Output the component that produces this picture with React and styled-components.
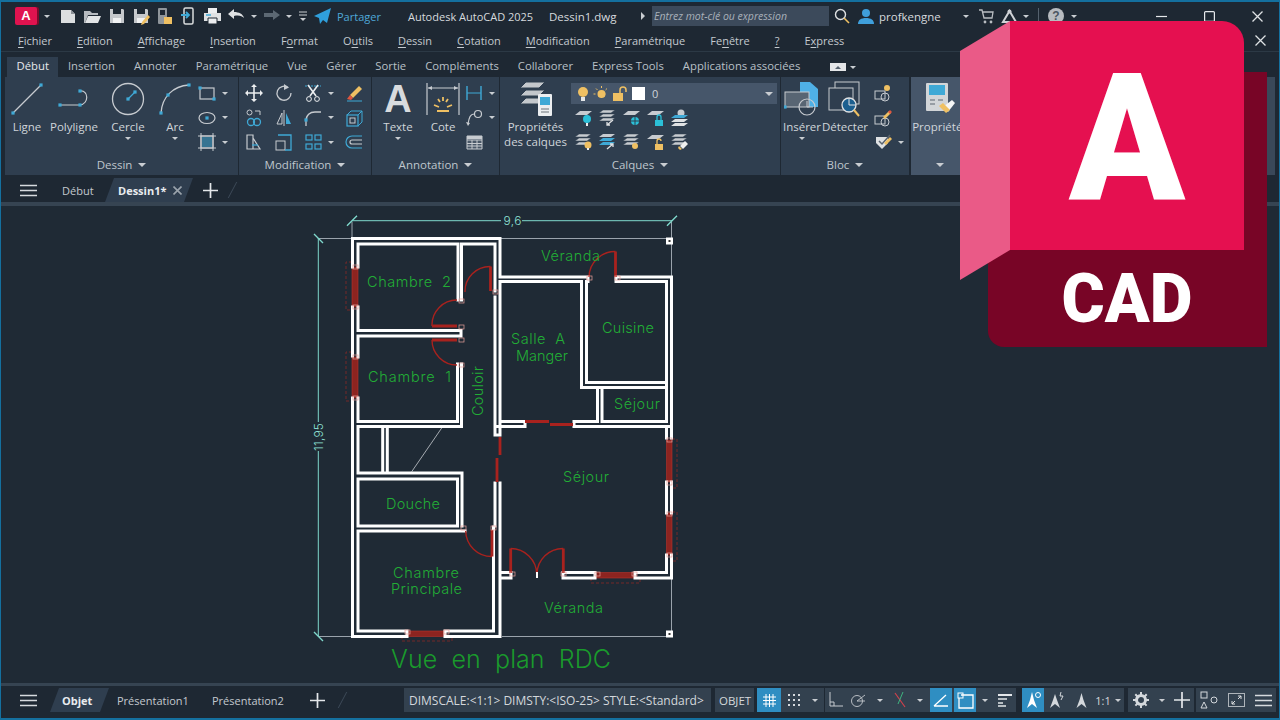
import React from 'react';
import styled, { createGlobalStyle } from 'styled-components';

const GREY = '#c9cdd2';
const CYAN = '#3fa9d6';
const YEL = '#efc063';
const DARK = '#1f2a35';

const GlobalStyle = createGlobalStyle`
  html, body { margin: 0; padding: 0; background: ${DARK}; overflow: hidden; }
  * { box-sizing: border-box; }
`;

const Window = styled.div`
  position: relative;
  width: 1280px;
  height: 720px;
  display: flex;
  flex-direction: column;
  padding-top: 2px;
  background: #1e2833;
  color: #c3c9cf;
  font-family: "Open Sans", "Noto Sans", sans-serif;
  font-size: 11.5px;
  overflow: hidden;
  &::after {
    content: '';
    position: absolute;
    inset: 0;
    border: solid #14709f;
    border-width: 2px 1px 2px 1px;
    pointer-events: none;
  }
`;

/* ---------- bars ---------- */
const TitleBar = styled.div`
  height: 28px;
  display: flex;
  align-items: center;
  flex: none;
  padding-left: 15px;
`;
const Slot = styled.div`
  width: ${p => p.$w}px;
  margin-left: ${p => p.$ml || 0}px;
  flex: none;
  display: flex;
  align-items: center;
  justify-content: center;
`;
const AppButton = styled.div`
  width: 22px;
  height: 18px;
  background: #e0134f;
  border-radius: 2px;
  box-shadow: 2px 0 0 #7b0b2c;
  color: #fff;
  font: 700 13px "Liberation Sans", sans-serif;
  text-align: center;
  line-height: 18px;
`;
const Caret = styled.span`
  display: inline-block;
  flex: none;
  width: 0;
  height: 0;
  border-left: ${p => p.$s || 3}px solid transparent;
  border-right: ${p => p.$s || 3}px solid transparent;
  ${p => (p.$up ? 'border-bottom' : 'border-top')}: ${p => p.$s || 3}px solid ${p => p.$c || GREY};
`;
const ShareText = styled.span`
  color: #4fa8d8;
  margin-left: 3px;
  width: 71px;
  flex: none;
  font-size: 11px;
`;
const TitleText = styled.span`
  color: #d6dade;
  font-size: ${p => p.$fs || 11.5}px;
  width: ${p => p.$w}px;
  flex: none;
  white-space: nowrap;
`;
const PlayMark = styled.span`
  width: 0;
  height: 0;
  flex: none;
  margin: 0 7px 0 0;
  border-top: 4px solid transparent;
  border-bottom: 4px solid transparent;
  border-left: 4px solid #c9cdd2;
`;
const SearchBox = styled.div`
  width: 177px;
  height: 20px;
  flex: none;
  background: #3c4a5b;
  color: #a9b1ba;
  font-style: italic;
  font-size: 10.5px;
  line-height: 20px;
  padding-left: 2px;
`;
const UserName = styled.span`
  width: 74px;
  flex: none;
  margin-left: 2px;
  color: #d6dade;
  font-size: 11.5px;
`;
const Sep = styled.span`
  width: 1px;
  height: 16px;
  flex: none;
  background: #55616e;
`;
const HelpMark = styled.text`
  font: 700 12px "Liberation Sans", sans-serif;
  fill: #4a5560;
  text-anchor: middle;
`;

const MenuBar = styled.div`
  height: 22px;
  flex: none;
  display: flex;
  align-items: center;
  gap: 25px;
  padding-left: 18px;
  border-bottom: 1px solid #2c3945;
  position: relative;
`;
const MenuItem = styled.span`
  white-space: nowrap;
  font-size: 11px;
  u { text-underline-offset: 2px; }
`;
const DocClose = styled.div`
  margin-left: auto;
  margin-right: 14px;
  display: flex;
`;

const TabBar = styled.div`
  height: 25px;
  flex: none;
  display: flex;
  align-items: flex-end;
  padding-left: 7px;
`;
const RibbonTab = styled.div`
  height: 20px;
  flex: none;
  white-space: nowrap;
  font-size: 11.3px;
  line-height: 18px;
  padding: 0 9.5px;
  background: ${p => (p.$active ? '#2f3e4f' : 'transparent')};
  color: ${p => (p.$active ? '#e6e9ec' : '#b9c0c7')};
`;
const WsSwitch = styled.div`
  margin-left: 20px;
  display: flex;
  align-items: center;
  gap: 4px;
  height: 20px;
`;
const WsBox = styled.span`
  width: 16px;
  height: 8px;
  background: #e4e6e8;
  display: flex;
  align-items: center;
  justify-content: center;
`;

/* ---------- ribbon ---------- */
const Ribbon = styled.div`
  height: 98px;
  flex: none;
  display: flex;
  gap: 1px;
  padding-left: 5px;
  padding-right: 5px;
`;
const Panel = styled.div`
  width: ${p => p.$w}px;
  flex: ${p => (p.$grow ? 1 : 'none')};
  margin-left: ${p => p.$ml || 0}px;
  background: ${p => p.$bg || '#2f3e4f'};
  display: flex;
  flex-direction: column;
`;
const PanelBody = styled.div`
  height: 78px;
  display: flex;
  padding: 4px 0 0 ${p => p.$pl || 0}px;
`;
const PanelLabel = styled.div`
  height: 20px;
  width: ${p => (p.$w ? p.$w + 'px' : 'auto')};
  padding-bottom: 1px;
  display: flex;
  align-items: center;
  justify-content: center;
  gap: 6px;
  font-size: 11.5px;
  color: #bfc6cd;
`;
const BigTool = styled.div`
  width: ${p => p.$w}px;
  flex: none;
  display: flex;
  flex-direction: column;
  align-items: center;
`;
const BigIcon = styled.div`
  height: 36px;
  display: flex;
  align-items: center;
  justify-content: center;
`;
const BigLabel = styled.div`
  margin-top: 2px;
  height: ${p => (p.$two ? 30 : 15)}px;
  line-height: 15px;
  white-space: nowrap;
  text-align: center;
  font-size: 11.5px;
  color: #d0d5da;
`;
const ToolCaret = styled.div`
  height: 8px;
  display: flex;
  align-items: center;
`;
const SmallColumn = styled.div`
  width: ${p => p.$w}px;
  flex: none;
  padding-left: ${p => p.$pl || 0}px;
  display: grid;
  grid-auto-rows: 24.5px;
`;
const SmallTool = styled.div`
  display: flex;
  align-items: center;
  justify-content: ${p => (p.$center ? 'center' : 'flex-start')};
  gap: 6px;
  height: 24.5px;
`;
const ToolGrid = styled.div`
  display: grid;
  grid-template-columns: ${p => p.$cols};
  grid-auto-rows: 24.5px;
`;
const LayerColumn = styled.div`
  width: 206px;
  flex: none;
`;
const LayerSelect = styled.div`
  height: 21px;
  margin: 2px 0 1.5px;
  background: #46566a;
  display: flex;
  align-items: center;
  gap: 2px;
  padding: 0 4px 0 4px;
`;
const Swatch = styled.span`
  width: 13px;
  height: 13px;
  margin-left: 2px;
  background: #fff;
  flex: none;
`;
const LayerName = styled.span`
  flex: 1;
  margin-left: 5px;
  color: #cfd4d9;
  font-size: 11px;
`;
const TextGlyph = styled.span`
  display: block;
  height: 36px;
  font: 700 38px "Liberation Sans", sans-serif;
  line-height: 36px;
  color: #d8dbde;
`;
const Gap = styled.div`
  height: 3px;
  flex: none;
`;

/* ---------- document tabs ---------- */
const DocTabs = styled.div`
  height: ${p => p.$h || 24}px;
  flex: none;
  display: flex;
  align-items: center;
  padding-left: 6px;
  width: ${p => (p.$w ? p.$w + 'px' : 'auto')};
`;
const MenuSlot = styled.div`
  width: 44px;
  flex: none;
  display: flex;
  justify-content: center;
`;
const DocTab = styled.div`
  height: 24px;
  flex: none;
  display: flex;
  align-items: center;
  white-space: nowrap;
  font-size: 11px;
  width: ${p => p.$w}px;
  padding-left: ${p => p.$pl || 0}px;
  font-weight: ${p => (p.$active ? 700 : 400)};
  color: ${p => (p.$active ? '#e9ecef' : '#c3c9cf')};
  background: ${p => (p.$active ? '#2f3e4f' : 'transparent')};
  clip-path: ${p => (p.$active ? 'polygon(9px 0, 100% 0, calc(100% - 9px) 100%, 0 100%)' : 'none')};
`;
const TabClose = styled.span`
  margin-left: 7px;
  display: flex;
`;
const Slash = styled.span`
  width: 1px;
  height: 16px;
  flex: none;
  margin-left: ${p => p.$ml || 0}px;
  background: #3d4a58;
  transform: skewX(-28deg);
`;
const Strip = styled.div`
  height: ${p => p.$h}px;
  flex: none;
  background: #364452;
`;
const Canvas = styled.div`
  height: 477px;
  flex: none;
  background: ${DARK};
`;
const StatusRow = styled.div`
  height: 30px;
  flex: none;
  display: flex;
  align-items: center;
  padding-bottom: 2px;
`;
const StatusGroup = styled.div`
  height: 24px;
  flex: none;
  display: flex;
  align-items: center;
  width: ${p => (p.$w ? p.$w + 'px' : 'auto')};
  margin-left: ${p => p.$ml || 0}px;
  padding-left: ${p => p.$pl || 0}px;
  background: #33414f;
  color: #d4d8dc;
  font-size: ${p => p.$fs || 11}px;
  white-space: nowrap;
`;
const StatusBtn = styled.div`
  width: ${p => p.$w}px;
  height: 24px;
  flex: none;
  margin-left: ${p => p.$ml || 0}px;
  display: flex;
  align-items: center;
  justify-content: center;
  background: ${p => (p.$on ? '#2f8ec2' : 'transparent')};
  font-size: 11px;
  color: #d4d8dc;
`;

/* ---------- overlay logo ---------- */
const Logo = styled.svg`
  position: absolute;
  left: 960px;
  top: 21px;
  z-index: 2;
`;
const LogoText = styled.text`
  font-family: "Roboto", "Liberation Sans", sans-serif;
  font-weight: 900;
  fill: #fff;
  text-anchor: middle;
`;

/* ---------- plan ---------- */
const PlanSvg = styled.svg`
  display: block;
`;
const PlanText = styled.text`
  font-family: "Inter", "Liberation Sans", sans-serif;
  font-weight: 300;
  font-size: ${p => p.$size || 14.5}px;
  fill: ${p => p.$c || '#22ad35'};
  white-space: pre;
`;

/* ---------- icons ---------- */
const Ico = ({ w = 18, h = 18, children }) => (
  <svg width={w} height={h} viewBox={`0 0 ${w} ${h}`} fill="none" style={{ display: 'block', flex: 'none' }}>
    {children}
  </svg>
);

const Hamburger = () => (
  <Ico w={17} h={13}><path d="M0 1.5h17M0 6.5h17M0 11.5h17" stroke="#d6dade" strokeWidth="1.7" /></Ico>
);
const Plus = ({ s = 15 }) => (
  <Ico w={s} h={s}><path d={`M${s / 2} 0V${s}M0 ${s / 2}H${s}`} stroke="#e4e7ea" strokeWidth="1.7" /></Ico>
);
const Cross = ({ s = 11, c = '#dfe2e5', sw = 1.2 }) => (
  <Ico w={s} h={s}><path d={`M0.5 0.5L${s - 0.5} ${s - 0.5}M${s - 0.5} 0.5L0.5 ${s - 0.5}`} stroke={c} strokeWidth={sw} /></Ico>
);

const Floppy = ({ pen }) => (
  <Ico>
    <path d="M2 2h13l1 1v13H2z" fill="#c5c8cc" />
    <path d="M5 2h8v5H5z" fill="#1e2833" />
    <path d="M5 11h8v5H5z" fill="#f1f2f3" />
    {pen && <path d="M10 15l6-7 2 2-6 7-3 1z" fill={YEL} />}
  </Ico>
);
const TitleIcons = {
  page: <Ico><path d="M2 3h10l4 4v9H2z" fill="#dcdee0" /><path d="M12 3v4h4" fill="#8b9097" /></Ico>,
  folder: <Ico><path d="M1 4h6l2 2h6v2H5l-3 8H1z" fill="#b7bbc0" /><path d="M5 9h13l-3 7H2z" fill="#e2e4e6" /></Ico>,
  doc: <Ico><rect x="3" y="1" width="9" height="16" rx="1" fill="#8f959b" /><path d="M9 10h8v7H9z" fill={YEL} /><path d="M5 3h5v5H5z" fill="#1e2833" /></Ico>,
  phone: <Ico><rect x="5" y="1" width="9" height="16" rx="1.5" stroke="#d9dbdd" strokeWidth="1.5" /><path d="M2 8h7M7 5l3 3-3 3" stroke={CYAN} strokeWidth="1.8" /></Ico>,
  print: <Ico w={19}><path d="M5 1h9v5H5z" fill="#eceef0" /><path d="M1 6h17v8H1z" fill="#dfe1e3" /><path d="M5 11h9v6H5z" fill="#eceef0" stroke="#1e2833" /><path d="M3 8h5" stroke={CYAN} strokeWidth="1.5" /></Ico>,
  undo: <Ico w={17}><path d="M0 7l6-5v3c5 0 9 2 10 6-2-2-5-3-10-2v3z" fill="#dfe1e3" /></Ico>,
  redo: <Ico w={17}><path d="M17 8l-7-5v3H1v4h9v3z" fill="#5c6873" /></Ico>,
  qat: <Ico w={10} h={12}><path d="M1 2h8M1 5h8" stroke={GREY} /><path d="M2 8h6l-3 3z" fill={GREY} /></Ico>,
  plane: <Ico w={18}><path d="M17 1L0 9l5 2 1 6 3-4 4 3z" fill="#2f9fdc" /></Ico>,
  search: <Ico w={16} h={16}><circle cx="6.5" cy="6.5" r="5" stroke="#dfe1e3" strokeWidth="1.4" /><path d="M10 10l5 5" stroke={YEL} strokeWidth="1.6" /></Ico>,
  user: <Ico w={16} h={16}><circle cx="8" cy="5" r="4" fill="#3f9fdc" /><path d="M0 16c0-4 3-6 8-6s8 2 8 6z" fill="#3f9fdc" /></Ico>,
  cart: <Ico w={15} h={15}><path d="M0 1h3l2 8h8l1-6H4" stroke="#b9bdc2" strokeWidth="1.3" /><circle cx="6" cy="13" r="1.4" fill="#b9bdc2" /><circle cx="12" cy="13" r="1.4" fill="#b9bdc2" /></Ico>,
  tri: <Ico w={17} h={15}><path d="M8.5 2L15 13H2z" stroke="#cfd2d6" strokeWidth="2" /><circle cx="8.5" cy="2.5" r="2" fill="#cfd2d6" /></Ico>,
  help: <Ico w={16} h={16}><circle cx="8" cy="8" r="8" fill="#b7bbc0" /><HelpMark x="8" y="12">?</HelpMark></Ico>,
  min: <Ico w={11} h={11}><path d="M0 5.5h11" stroke="#e4e7ea" strokeWidth="1.2" /></Ico>,
  max: <Ico w={11} h={11}><rect x=".6" y=".6" width="9.8" height="9.8" rx="1" stroke="#e4e7ea" strokeWidth="1.2" /></Ico>,
};

const Pt = ({ x, y }) => <rect x={x - 1.6} y={y - 1.6} width="3.2" height="3.2" fill={CYAN} />;
const RibbonBig = {
  line: <Ico w={34} h={34}><path d="M3 31L31 3" stroke="#c7cbd0" strokeWidth="1.2" /><Pt x={3} y={31} /><Pt x={31} y={3} /></Ico>,
  poly: <Ico w={36} h={30}><path d="M4 21H24M24 7c9-1 9 13 0 14" stroke="#c7cbd0" strokeWidth="1.2" /><Pt x={4} y={21} /><Pt x={24} y={21} /><Pt x={24} y={7} /></Ico>,
  circle: <Ico w={34} h={34}><circle cx="17" cy="17" r="15.5" stroke="#c7cbd0" strokeWidth="1.3" /><path d="M17 17l7-7" stroke={CYAN} strokeWidth="1.2" /><Pt x={17} y={17} /><Pt x={24} y={10} /></Ico>,
  arc: <Ico w={34} h={34}><path d="M3 31C4 15 15 4 31 3" stroke="#c7cbd0" strokeWidth="1.3" /><Pt x={3} y={31} /><Pt x={10} y={13} /><Pt x={31} y={3} /></Ico>,
  dim: <Ico w={34} h={34}><path d="M1 1V33M33 1V33M2 6H32" stroke="#c7cbd0" strokeWidth="1.2" /><path d="M2 6l4-2v4zM32 6l-4-2v4z" fill="#c7cbd0" /><path d="M8 23l5 2M26 23l-5 2M17 19v-4M11 29h12M12 17l2 3M22 17l-2 3" stroke={YEL} strokeWidth="1.8" /></Ico>,
  layers: <Ico w={36} h={40}>
    <path d="M8 3h19l-6 6H2zM8 11h19l-6 6H2zM8 19h19l-6 6H2z" fill="#c4c8cc" stroke="#2f3e4f" />
    <rect x="20" y="15" width="14" height="22" rx="1" fill="#eceef0" /><rect x="22" y="18" width="10" height="8" fill={CYAN} /><path d="M23 30h8M23 33h8" stroke="#6b7278" />
  </Ico>,
  insert: <Ico w={36} h={36}><path d="M16 1h10l8 7v18H16z" fill="#4fb0e6" /><rect x="1" y="11" width="24" height="15" fill="#586573" stroke="#c7cbd0" /><circle cx="23" cy="26" r="8" stroke="#c7cbd0" strokeWidth="1.2" /><path d="M23 20v6h6" stroke="#c7cbd0" /><Pt x={1} y={26} /></Ico>,
  detect: <Ico w={36} h={36}><rect x="8" y="1" width="24" height="22" stroke="#c7cbd0" /><rect x="2" y="7" width="24" height="22" fill="#2f3e4f" stroke="#c7cbd0" /><circle cx="22" cy="24" r="7" fill="#1c5f8f" stroke="#dfe1e3" strokeWidth="1.3" /><path d="M22 17v7h7" stroke="#dfe1e3" /><path d="M27 29l5 6" stroke={YEL} strokeWidth="2" /></Ico>,
  props: <Ico w={34} h={34}><rect x="3" y="1" width="22" height="28" rx="1" fill="#d2d5d8" /><rect x="6" y="3" width="16" height="10" fill={CYAN} /><path d="M7 18h5M15 18h5M7 22h5" stroke="#5d6670" strokeWidth="1.2" /><path d="M20 25l9-7 3 3-7 9z" fill="#f6f6f6" /><path d="M16 24l4-3 7 7-4 3z" fill={YEL} /></Ico>,
};

const stroke = '#c7cbd0';
const Small = {
  rect: <Ico><rect x="2" y="4" width="14" height="11" stroke={stroke} strokeWidth="1.2" /><Pt x={2} y={4} /><Pt x={16} y={15} /></Ico>,
  ellipse: <Ico><ellipse cx="9" cy="9" rx="8" ry="5.5" stroke={stroke} strokeWidth="1.2" /><Pt x={9} y={9} /></Ico>,
  hatch: <Ico><rect x="3" y="3" width="12" height="12" stroke={stroke} strokeWidth="1.2" /><path d="M4 4h10v10H4z" fill={CYAN} opacity=".5" /><path d="M0 3h18M0 15h18M3 0v18M15 0v18" stroke={stroke} /></Ico>,
  move: <Ico><path d="M9 1v16M1 9h16" stroke="#eceef0" strokeWidth="1.6" /><path d="M9 0l3 3H6zM9 18l3-3H6zM0 9l3-3v6zM18 9l-3-3v6z" fill="#eceef0" /></Ico>,
  rotate: <Ico><path d="M13 3.5A7 7 0 1 0 16 9" stroke={stroke} strokeWidth="1.3" /><path d="M9 0l5 3.5L9 6z" fill={stroke} /></Ico>,
  trim: <Ico><path d="M1 2h16" stroke={CYAN} strokeDasharray="2 1" /><path d="M4 1l8 11M14 1L6 12" stroke="#eceef0" strokeWidth="1.6" /><circle cx="5" cy="15" r="2.4" stroke="#eceef0" /><circle cx="13" cy="15" r="2.4" stroke="#eceef0" /></Ico>,
  erase: <Ico><path d="M5 11L14 2l3 3-9 9z" fill={YEL} /><path d="M5 11l3 3-2 2-4-1z" fill="#e0563f" /><path d="M2 17h15" stroke={CYAN} /></Ico>,
  copy: <Ico><rect x="2" y="1" width="5" height="5" rx="2.5" stroke={stroke} /><path d="M10 2h5v4" stroke={stroke} /><circle cx="6" cy="13" r="3.5" stroke={CYAN} strokeWidth="1.3" /><circle cx="12" cy="13" r="3.5" stroke={CYAN} strokeWidth="1.3" /></Ico>,
  mirror: <Ico><path d="M9 1v16" stroke={stroke} /><path d="M7 4v11H2z" stroke={stroke} /><path d="M11 4v11h5z" fill={CYAN} /></Ico>,
  fillet: <Ico><path d="M2 17v-5C2 6 6 3 11 3h6" stroke={stroke} strokeWidth="1.3" /><Pt x={2} y={11} /></Ico>,
  array3d: <Ico><rect x="2" y="6" width="11" height="11" stroke={CYAN} strokeWidth="1.2" /><path d="M2 6l4-4h11v11l-4 4M13 6l4-4" stroke={CYAN} /><rect x="5" y="9" width="5" height="5" stroke={stroke} /></Ico>,
  stretch: <Ico><path d="M2 2h6v14H2zM8 5l7 11H8" stroke={stroke} strokeWidth="1.2" /><path d="M7 12h6" stroke={CYAN} strokeWidth="1.3" /></Ico>,
  scale: <Ico><rect x="1" y="8" width="9" height="9" stroke={stroke} /><path d="M3 2h13v15h-6" stroke={CYAN} strokeWidth="1.3" /></Ico>,
  grid: <Ico><rect x="2" y="2" width="6" height="5" stroke={CYAN} strokeWidth="1.2" /><rect x="11" y="2" width="6" height="5" stroke={CYAN} strokeWidth="1.2" /><rect x="2" y="11" width="6" height="5" stroke={CYAN} strokeWidth="1.2" /><rect x="11" y="11" width="6" height="5" stroke={CYAN} strokeWidth="1.2" /></Ico>,
  offset: <Ico><path d="M17 3H7a6 6 0 0 0 0 12h10" stroke={CYAN} strokeWidth="1.2" /><path d="M17 7H7a2 2 0 0 0 0 4h10" stroke={stroke} strokeWidth="1.2" /></Ico>,
  hdim: <Ico><path d="M2 2v14M16 2v14" stroke={CYAN} strokeWidth="1.4" /><path d="M2 9h14" stroke={CYAN} /></Ico>,
  leader: <Ico><circle cx="13" cy="5" r="3.5" stroke={stroke} strokeWidth="1.2" /><path d="M9.5 5C5 5 4 9 3 15" stroke={stroke} strokeWidth="1.2" /><path d="M1 13l2 4 2-3z" fill={stroke} /></Ico>,
  table: <Ico><path d="M2 3h15v13H2z" fill="#4a5868" stroke={stroke} /><path d="M2 7h15M2 10.500h15M2 13h15M7 7v9M12 7v9" stroke={stroke} /><path d="M2 3h15v3H2z" fill={stroke} /></Ico>,
  attr: <Ico><rect x="1" y="7" width="10" height="8" stroke={stroke} /><circle cx="11" cy="13" r="4" stroke={stroke} /><circle cx="13" cy="4" r="3" fill={YEL} /></Ico>,
  attr2: <Ico><rect x="1" y="7" width="10" height="8" stroke={stroke} /><circle cx="11" cy="13" r="4" stroke={stroke} /><path d="M9 8l6-6 2 2-6 6z" fill={YEL} /><path d="M14 3l2-2 2 2-2 2z" fill="#e0563f" /></Ico>,
  tick: <Ico><path d="M2 4h12v6l-6 6-6-6z" fill="#dfe1e3" /><path d="M5 8l3 3 8-9" stroke="#59636e" strokeWidth="1.5" /><path d="M10 10l6-6 2 2-6 6z" fill={YEL} /></Ico>,
};

const layerBase = <path d="M6 2h12l-5 4H1z" fill="#c7cbd0" />;
const stack = <path d="M5 1h12l-4 3H1zM5 5h12l-4 3H1zM5 9h12l-4 3H1z" fill="#c7cbd0" stroke="#2f3e4f" strokeWidth=".5" />;
const LayerIcons = [
  <Ico key="a">{layerBase}<circle cx="13" cy="10" r="4" fill="#2bc0d8" /><path d="M12 14h2v3h-2z" fill="#eee" /></Ico>,
  <Ico key="b">{stack}<path d="M9 16l6-5M12 16H9v-3" stroke="#dfe1e3" strokeWidth="1.3" /></Ico>,
  <Ico key="c">{layerBase}<circle cx="13" cy="12" r="4" fill="#2bc0d8" /><path d="M7 12h12M13 6v12" stroke="#2f3e4f" /></Ico>,
  <Ico key="d">{layerBase}<path d="M9 11h8v6H9z" fill="#2bc0d8" /><path d="M11 11V8a2 2 0 0 1 4 0v3" stroke="#2bc0d8" strokeWidth="1.3" /></Ico>,
  <Ico key="e"><circle cx="11" cy="4" r="3.500" fill="#c7cbd0" /><path d="M5 6h13l-4 3H1z" fill="#3fa9d6" /><path d="M5 10h13l-4 3H1zM5 14h13l-4 3H1z" fill="#dfe1e3" /></Ico>,
  <Ico key="f">{stack}<circle cx="14" cy="12" r="3.500" fill={YEL} /><path d="M13 15h2v2h-2z" fill="#eee" /></Ico>,
  <Ico key="g"><path d="M5 1h12l-4 3H1z" fill="#c7cbd0" /><path d="M5 5h12l-4 3H1zM5 9h12l-4 3H1z" fill={CYAN} /><path d="M9 16l6-5M12 11h3v3" stroke="#dfe1e3" strokeWidth="1.3" /></Ico>,
  <Ico key="h">{stack}<circle cx="13" cy="13" r="3" fill={YEL} /></Ico>,
  <Ico key="i">{layerBase}<path d="M9 11h8v6H9z" fill={YEL} /><path d="M11 11V8a2 2 0 0 1 4 0" stroke={YEL} strokeWidth="1.3" /></Ico>,
  <Ico key="j">{stack}<path d="M10 13l5-5 3 3-5 5z" fill="#f0f0f0" /><path d="M9 13l3 3-2 1-2-2z" fill={YEL} /></Ico>,
];
const LampIcons = (
  <>
    <Ico w={16} h={16}><circle cx="8" cy="6" r="5" fill={YEL} /><path d="M6 11h4v4H6z" fill="#e4e6e8" /></Ico>
    <Ico w={17} h={16}><circle cx="8.500" cy="8" r="4" fill={YEL} /><path d="M8.500 0v16M0.500 8h16M3 2.500l11 11M14 2.500l-11 11" stroke={YEL} strokeDasharray="2 8" /></Ico>
    <Ico w={16} h={16}><path d="M1 7h10v8H1z" fill={YEL} /><path d="M8 7V4a3 3 0 0 1 6 0v2" stroke={YEL} strokeWidth="1.500" /></Ico>
  </>
);

const Status = {
  grid: <Ico w={15} h={15}><path d="M1 4h13M1 7.500h13M1 11h13M4 1v13M7.500 1v13M11 1v13" stroke="#fff" /></Ico>,
  dots: <Ico w={14} h={14}><path d="M1 2h12M1 7h12M1 12h12" stroke="#d4d8dc" strokeWidth="2" strokeDasharray="2 3" /></Ico>,
  ortho: <Ico w={16} h={16}><path d="M2 0v14h13M2 10h4v4" stroke="#c7cbd0" /></Ico>,
  polar: <Ico w={16} h={16}><circle cx="7" cy="9" r="5.500" stroke="#b8bdc3" /><path d="M7 9l8-6M7 9h8" stroke="#b8bdc3" /></Ico>,
  osnap: <Ico w={16} h={18}><path d="M3 2l10 14" stroke="#d0414c" strokeWidth="1.2" /><path d="M11 1L6 13" stroke="#3fb37f" /></Ico>,
  iso: <Ico w={16} h={16}><path d="M1 14h14M1 14L13 3" stroke="#fff" strokeWidth="1.3" /></Ico>,
  box: <Ico w={17} h={17}><path d="M4 3h12v13H2V6" stroke="#fff" strokeWidth="1.3" /><rect x="1" y="1" width="5" height="5" stroke="#fff" /></Ico>,
  weight: <Ico w={16} h={14}><path d="M1 2h14" stroke="#e4e7ea" strokeWidth="2" /><path d="M1 6h9M1 10h5M1 13h8" stroke="#e4e7ea" strokeWidth="1.6" /></Ico>,
  annot: <Ico w={17} h={18}><path d="M7 1l2 8 3 8-5-4-5 4 3-8z" fill="#fff" /><circle cx="13" cy="4" r="2.500" stroke="#fff" /></Ico>,
  annot2: <Ico w={17} h={18}><path d="M7 3l2 6 3 8-5-4-5 4 3-8z" fill="#d4d8dc" /><path d="M13 1l-1 4h3l-2 4" stroke="#d4d8dc" /></Ico>,
  annot3: <Ico w={15} h={18}><path d="M7.500 2l2 7 3 8-5-4-5 4 3-8z" fill="#d4d8dc" /></Ico>,
  gear: <Ico w={16} h={16}><circle cx="8" cy="8" r="4.500" stroke="#d4d8dc" strokeWidth="3" /><path d="M8 0v16M0 8h16M2.300 2.300l11.400 11.400M13.700 2.300L2.300 13.700" stroke="#d4d8dc" strokeWidth="2" strokeDasharray="3 10" /></Ico>,
  custom: <Ico w={18} h={18}><rect x="1" y="1" width="6" height="6" stroke="#d4d8dc" /><circle cx="14" cy="9" r="3" stroke="#d4d8dc" /><path d="M4 11l3 6H1z" stroke="#d4d8dc" /></Ico>,
  full: <Ico w={17} h={14}><rect x=".5" y=".5" width="16" height="13" stroke="#aeb4ba" /><path d="M10 6l3-3M13 3h-3M13 3v3M7 8l-3 3M4 11h3M4 11V8" stroke="#dfe1e3" /></Ico>,
};

/* ---------- plan data (page coordinates) ---------- */
const WALLS = `
M352.500 238.500H500V277H588M616 277H671.500V438M671.500 482V513M671.500 555V578H635V572.500H666.500V555M595 572.500V578H563V572.500H595
M511 572.500V578H500M511 572.500H500M500 636.500V483M500 435V281.500H581.500V387.500H666.500M586.500 281.500V382.500H666.500M616 281.500H666.500V421.500H602V388
M597.500 388V421.500H574V426.500H671.500M525 421.500H500M525 421.500V426.500H495M495 435H500M500 636.500H445V631M407 631V636.500H352.500V398M352.500 356V307M352.500 267V238.500
M358 267V244H458V300M461.500 300V244H495V291M495 297V435M358 307V330.500H461V336H358V357M358 398V421.500H457.500V364M461.500 364V426.500H358V473H462V526
M358 479H457.500V526H358ZM358 531H465M358 531V631H407M445 631H493.500V527M495 483V526M382.700 426.500V473M387.300 426.500V473
M666.500 426.500V438M666.500 482V513M588 277V281.500M616 277V281.500
`;
const RED_THICK = 'M615.500 277V251.500M490.500 291V266.500M432 326H457M432 340H457M492 530V556.500M510.700 573V548.500M563.300 573V548.500M525 421.500H549M550 424.500H573M500 437V455M497 458V482';
const RED_ARC = 'M615.500 251.500A26 26 0 0 0 589 277M490.500 266.500A25 25 0 0 0 465 292M432 326A25 25 0 0 1 457 300M432 340A25 25 0 0 0 457 365M492 556.500A26 26 0 0 1 465.700 531M510.700 548.500A26 26 0 0 1 536.700 574M563.300 548.500A26 26 0 0 0 537 574';
const WINDOWS = [
  [352, 267, 6, 40], [352, 357, 6, 41], [666.5, 440, 5.5, 42], [666.5, 513, 5.5, 42], [595, 572.5, 40, 5.5], [407, 631, 38, 5.5],
];
const DASHES = 'M352 262H346V310H352M352 352H346V401H352M672 439H677V488H672M672 512H677V561H672M591 578V583H640V578M402 636V641H452V636';
const JAMBS = [
  [353, 265], [353, 305], [353, 355], [353, 396], [459, 299], [459, 325], [459, 338], [459, 363], [493, 290], [587, 276], [615, 276], [667, 438], [667, 481], [667, 512], [667, 553], [595, 572], [632, 572], [561, 572], [510, 572], [405, 630], [444, 630], [461, 526], [491, 526],
];
const LABELS = [
  ['Chambre  2', 367, 287, 84], ['Chambre  1', 368, 382, 83], ['Véranda', 541, 261, 59], ['Salle  A', 511, 344, 54], ['Manger', 516, 361, 52],
  ['Cuisine', 602, 333, 52], ['Séjour', 614, 409, 46], ['Séjour', 563, 482, 46], ['Douche', 386, 509, 54], ['Chambre', 393, 578, 66], ['Principale', 391, 594, 71], ['Véranda', 544, 613, 59],
];

const Plan = () => (
  <PlanSvg width="1280" height="477" viewBox="0 206 1280 477">
    <path d="M352 222V238M671.500 222V277M501 238.500H669M318 238.500H352M318 636.500H352M502 636.500H669M671.500 578V636" stroke="#9aa3ac" strokeWidth="1" />
    <path d="M352 220.700H501M522 220.700H672M318.300 238V422M318.300 451V636" stroke="#7fd8cc" strokeWidth="1" />
    <path d="M347 225.700L357 215.700M667 225.700L677 215.700M314 234L323 243M314 632L323 641" stroke="#7fd8cc" strokeWidth="1.400" />
    <PlanText x="503.500" y="225" textLength="18" $size={12} $c="#8fe2d6">9,6</PlanText>
    <PlanText transform="translate(322.500 451) rotate(-90)" textLength="28" $size={12} $c="#8fe2d6">11,95</PlanText>
    <path d="M441.700 428L411.700 471.700" stroke="#c8ccd0" strokeWidth=".8" />
    {WINDOWS.map(([x, y, w, h]) => (
      <rect key={`${x}-${y}`} x={x} y={y} width={w} height={h} fill="#8c2420" stroke="#b7332c" strokeWidth=".6" />
    ))}
    <path d={DASHES} stroke="#8c2a26" strokeWidth=".8" strokeDasharray="3 2" fill="none" />
    <path d={WALLS} stroke="#fff" strokeWidth="3" fill="none" strokeLinecap="square" />
    <path d={RED_THICK} stroke="#a8221e" strokeWidth="2.800" />
    <path d={RED_ARC} stroke="#a8221e" strokeWidth="1.400" fill="none" />
    {JAMBS.map(([x, y]) => (
      <rect key={`${x}-${y}`} x={x} y={y} width="5" height="4" fill="none" stroke="#e8a09a" strokeWidth=".7" />
    ))}
    <rect x="536" y="572" width="2" height="6" fill="#fff" />
    <rect x="666" y="237.500" width="7" height="7" fill="#fff" /><rect x="668.500" y="240" width="2" height="2" fill="#333" />
    <rect x="666" y="630.500" width="7" height="7" fill="#fff" /><rect x="668.500" y="633" width="2" height="2" fill="#333" />
    {LABELS.map(([t, x, y, w]) => (
      <PlanText key={`${t}-${x}`} x={x} y={y} textLength={w}>{t}</PlanText>
    ))}
    <PlanText transform="translate(483 416) rotate(-90)" textLength="50">Couloir</PlanText>
    <PlanText x="391" y="668" textLength="220" $size={25} $c="#1a9a2c">Vue  en  plan  RDC</PlanText>
  </PlanSvg>
);

const MENU = [
  ['', 'F', 'ichier'], ['', 'E', 'dition'], ['', 'A', 'ffichage'], ['', 'I', 'nsertion'], ['F', 'o', 'rmat'], ['O', 'u', 'tils'], ['', 'D', 'essin'],
  ['', 'C', 'otation'], ['', 'M', 'odification'], ['', 'P', 'aramétrique'], ['Fe', 'n', 'être'], ['', '?', ''], ['E', 'x', 'press'],
];
const TABS = ['Insertion', 'Annoter', 'Paramétrique', 'Vue', 'Gérer', 'Sortie', 'Compléments', 'Collaborer', 'Express Tools', 'Applications associées'];

const Big = ({ w, icon, label, caret, two }) => (
  <BigTool $w={w}>
    <BigIcon>{icon}</BigIcon>
    <BigLabel $two={two}>{label}</BigLabel>
    {caret && <ToolCaret><Caret /></ToolCaret>}
  </BigTool>
);
const Tool = ({ icon, caret, center }) => (
  <SmallTool $center={center}>{icon}{caret && <Caret />}</SmallTool>
);
const Label = ({ children }) => (
  <PanelLabel>{children}<Caret $s={4} /></PanelLabel>
);

export default function App() {
  return (
    <Window>
      <GlobalStyle />

      <TitleBar>
        <AppButton>A</AppButton>
        <Slot $w={18} $ml={1}><Caret /></Slot>
        <Slot $w={24}>{TitleIcons.page}</Slot>
        <Slot $w={24}>{TitleIcons.folder}</Slot>
        <Slot $w={25}><Floppy /></Slot>
        <Slot $w={23}><Floppy pen /></Slot>
        <Slot $w={24}>{TitleIcons.doc}</Slot>
        <Slot $w={24}>{TitleIcons.phone}</Slot>
        <Slot $w={24}>{TitleIcons.print}</Slot>
        <Slot $w={25}>{TitleIcons.undo}</Slot>
        <Slot $w={10}><Caret /></Slot>
        <Slot $w={25}>{TitleIcons.redo}</Slot>
        <Slot $w={10}><Caret /></Slot>
        <Slot $w={18}>{TitleIcons.qat}</Slot>
        <Slot $w={22}>{TitleIcons.plane}</Slot>
        <ShareText>Partager</ShareText>
        <TitleText $w={141} $fs={11}>Autodesk AutoCAD 2025</TitleText>
        <TitleText $w={92}>Dessin1.dwg</TitleText>
        <PlayMark />
        <SearchBox>Entrez mot-clé ou expression</SearchBox>
        <Slot $w={26}>{TitleIcons.search}</Slot>
        <Slot $w={22}>{TitleIcons.user}</Slot>
        <UserName>profkengne</UserName>
        <Slot $w={26}><Caret /></Slot>
        <Slot $w={22} $ml={-4}>{TitleIcons.cart}</Slot>
        <Slot $w={23} $ml={1}>{TitleIcons.tri}</Slot>
        <Slot $w={10}><Caret /></Slot>
        <Slot $w={14}><Sep /></Slot>
        <Slot $w={22}>{TitleIcons.help}</Slot>
        <Slot $w={14}><Caret /></Slot>
        <Slot $w={20} $ml={70}>{TitleIcons.min}</Slot>
        <Slot $w={20} $ml={28}>{TitleIcons.max}</Slot>
        <Slot $w={20} $ml={28}><Cross s={11} sw={1.3} /></Slot>
      </TitleBar>

      <MenuBar>
        {MENU.map(([a, u, b]) => (
          <MenuItem key={a + u + b}>{a}<u>{u}</u>{b}</MenuItem>
        ))}
        <DocClose><Cross s={11} sw={1.3} /></DocClose>
      </MenuBar>

      <TabBar>
        <RibbonTab $active>Début</RibbonTab>
        {TABS.map(t => <RibbonTab key={t}>{t}</RibbonTab>)}
        <WsSwitch>
          <WsBox><Caret $up $c="#55616e" /></WsBox>
          <Caret />
        </WsSwitch>
      </TabBar>

      <Ribbon>
        <Panel $w={233}>
          <PanelBody $pl={3}>
            <Big w={38} icon={RibbonBig.line} label="Ligne" />
            <Big w={56} icon={RibbonBig.poly} label="Polyligne" />
            <Big w={52} icon={RibbonBig.circle} label="Cercle" caret />
            <Big w={42} icon={RibbonBig.arc} label="Arc" caret />
            <SmallColumn $w={38} $pl={2}>
              <Tool icon={Small.rect} caret />
              <Tool icon={Small.ellipse} caret />
              <Tool icon={Small.hatch} caret />
            </SmallColumn>
          </PanelBody>
          <Label>Dessin</Label>
        </Panel>

        <Panel $w={132}>
          <PanelBody>
            <ToolGrid $cols="30px 30px 40px 30px">
              <Tool center icon={Small.move} />
              <Tool center icon={Small.rotate} />
              <Tool center icon={Small.trim} caret />
              <Tool center icon={Small.erase} />
              <Tool center icon={Small.copy} />
              <Tool center icon={Small.mirror} />
              <Tool center icon={Small.fillet} caret />
              <Tool center icon={Small.array3d} />
              <Tool center icon={Small.stretch} />
              <Tool center icon={Small.scale} />
              <Tool center icon={Small.grid} caret />
              <Tool center icon={Small.offset} />
            </ToolGrid>
          </PanelBody>
          <Label>Modification</Label>
        </Panel>

        <Panel $w={127}>
          <PanelBody>
            <Big w={52} icon={<TextGlyph>A</TextGlyph>} label="Texte" caret />
            <Big w={38} icon={RibbonBig.dim} label="Cote" />
            <SmallColumn $w={37} $pl={3}>
              <Tool icon={Small.hdim} caret />
              <Tool icon={Small.leader} caret />
              <Tool icon={Small.table} />
            </SmallColumn>
          </PanelBody>
          <Label>Annotation</Label>
        </Panel>

        <Panel $w={280}>
          <PanelBody>
            <Big w={71} icon={RibbonBig.layers} label={<>Propriétés<br />des calques</>} two />
            <LayerColumn>
              <LayerSelect>
                {LampIcons}
                <Swatch />
                <LayerName>0</LayerName>
                <Caret $s={4} />
              </LayerSelect>
              <ToolGrid $cols="repeat(5, 24px)">
                {LayerIcons.map(icon => <Tool key={icon.key} center icon={icon} />)}
              </ToolGrid>
            </LayerColumn>
          </PanelBody>
          <Label>Calques</Label>
        </Panel>

        <Panel $w={128}>
          <PanelBody>
            <Big w={42} icon={RibbonBig.insert} label="Insérer" caret />
            <Big w={44} icon={RibbonBig.detect} label="Détecter" />
            <SmallColumn $w={42} $pl={7}>
              <Tool icon={Small.attr} />
              <Tool icon={Small.attr2} />
              <Tool icon={Small.tick} caret />
            </SmallColumn>
          </PanelBody>
          <Label>Bloc</Label>
        </Panel>

        <Panel $w={90} $ml={1} $bg="#46566a">
          <PanelBody>
            <Big w={58} icon={RibbonBig.props} label="Propriétés" />
          </PanelBody>
          <PanelLabel $w={58}><Caret $s={4} /></PanelLabel>
        </Panel>
        <Panel $grow $bg="#3a4859" />
      </Ribbon>

      <Gap />

      <DocTabs>
        <MenuSlot><Hamburger /></MenuSlot>
        <DocTab $w={55} $pl={12}>Début</DocTab>
        <DocTab $active $w={88} $pl={13}>Dessin1*<TabClose><Cross s={9} c="#9aa3ac" sw={1.6} /></TabClose></DocTab>
        <Slot $w={34}><Plus /></Slot>
        <Slash $ml={5} />
      </DocTabs>
      <Strip $h={4} />

      <Canvas><Plan /></Canvas>
      <Strip $h={3} />

      <StatusRow>
        <DocTabs $h={28} $w={404}>
          <MenuSlot><Hamburger /></MenuSlot>
          <DocTab $active $w={59} $pl={12}>Objet</DocTab>
          <DocTab $w={103} $pl={8}>Présentation1</DocTab>
          <DocTab $w={84}>Présentation2</DocTab>
          <Slot $w={42}><Plus /></Slot>
          <Slash $ml={4} />
        </DocTabs>
        <StatusGroup $w={307} $pl={5} $fs={12}>DIMSCALE:&lt;1:1&gt; DIMSTY:&lt;ISO-25&gt; STYLE:&lt;Standard&gt;</StatusGroup>
        <StatusGroup $w={39} $ml={4} $pl={4} $fs={11.5}>OBJET</StatusGroup>
        <StatusGroup $ml={3}>
          <StatusBtn $w={24} $on>{Status.grid}</StatusBtn>
          <StatusBtn $w={25}>{Status.dots}</StatusBtn>
          <StatusBtn $w={18}><Caret /></StatusBtn>
        </StatusGroup>
        <StatusGroup $ml={1}>
          <StatusBtn $w={22}>{Status.ortho}</StatusBtn>
          <StatusBtn $w={22}>{Status.polar}</StatusBtn>
          <StatusBtn $w={22}><Caret /></StatusBtn>
          <StatusBtn $w={18}>{Status.osnap}</StatusBtn>
          <StatusBtn $w={21}><Caret /></StatusBtn>
          <StatusBtn $w={22} $on>{Status.iso}</StatusBtn>
          <StatusBtn $w={22} $ml={2} $on>{Status.box}</StatusBtn>
          <StatusBtn $w={18}><Caret /></StatusBtn>
          <StatusBtn $w={22}>{Status.weight}</StatusBtn>
        </StatusGroup>
        <StatusGroup $ml={6}>
          <StatusBtn $w={22} $on>{Status.annot}</StatusBtn>
          <StatusBtn $w={24}>{Status.annot2}</StatusBtn>
          <StatusBtn $w={26}>{Status.annot3}</StatusBtn>
          <StatusBtn $w={18}>1:1</StatusBtn>
          <StatusBtn $w={12}><Caret /></StatusBtn>
        </StatusGroup>
        <StatusGroup $ml={4}>
          <StatusBtn $w={26}>{Status.gear}</StatusBtn>
          <StatusBtn $w={16}><Caret /></StatusBtn>
          <StatusBtn $w={24}><Plus s={16} /></StatusBtn>
        </StatusGroup>
        <StatusGroup $ml={2}>
          <StatusBtn $w={26}>{Status.custom}</StatusBtn>
          <StatusBtn $w={28}>{Status.full}</StatusBtn>
          <StatusBtn $w={26}><Hamburger /></StatusBtn>
        </StatusGroup>
      </StatusRow>

      <Logo width="307" height="326" viewBox="960 21 307 326">
        <path d="M988 72H1267V347H1004a16 16 0 0 1-16-16Z" fill="#780526" />
        <path d="M1010 21H1222a22 22 0 0 1 22 22V250H1010Z" fill="#e51050" />
        <path d="M960 51L1010 21V250L960 280Z" fill="#ea5a87" />
        <LogoText x="1127" y="200" fontSize="178" textLength="116" lengthAdjust="spacingAndGlyphs">A</LogoText>
        <LogoText x="1127" y="322" fontSize="68" textLength="131" lengthAdjust="spacingAndGlyphs">CAD</LogoText>
      </Logo>
    </Window>
  );
}
